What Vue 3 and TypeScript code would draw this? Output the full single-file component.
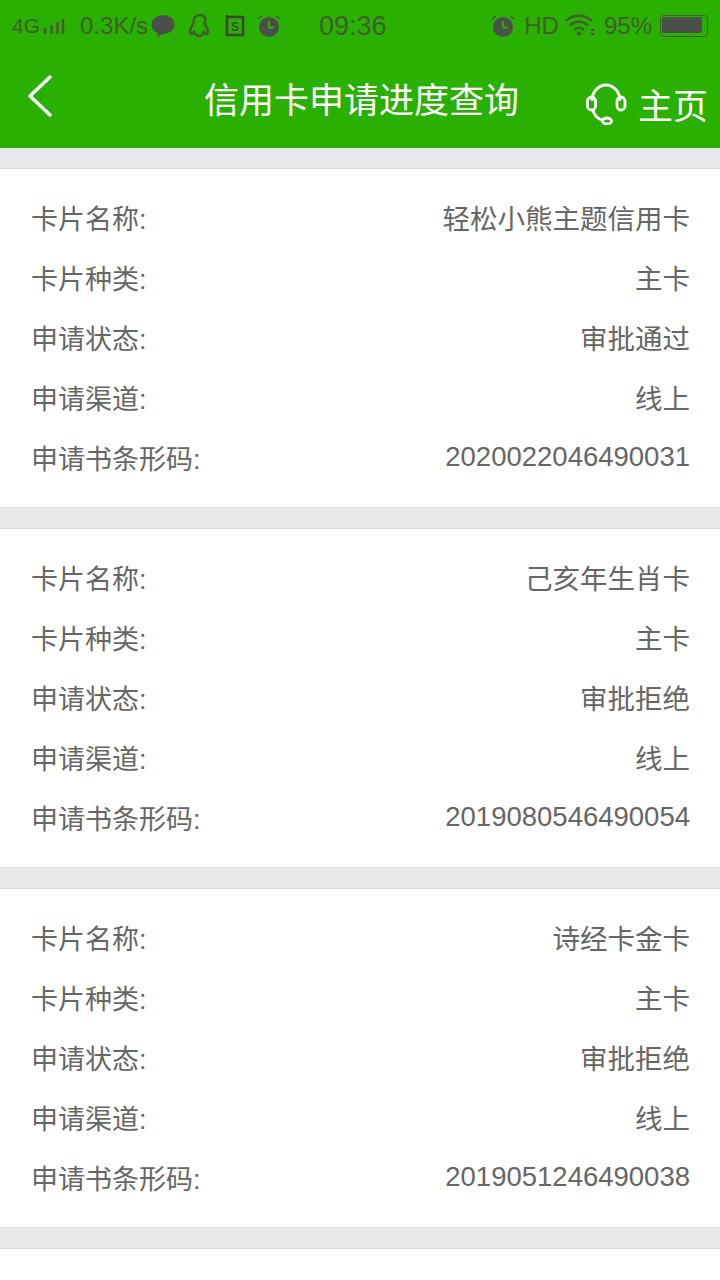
<script setup lang="ts">
interface Card {
  name: string
  kind: string
  status: string
  channel: string
  code: string
}

const cards: Card[] = [
  { name: '轻松小熊主题信用卡', kind: '主卡', status: '审批通过', channel: '线上', code: '2020022046490031' },
  { name: '己亥年生肖卡', kind: '主卡', status: '审批拒绝', channel: '线上', code: '2019080546490054' },
  { name: '诗经卡金卡', kind: '主卡', status: '审批拒绝', channel: '线上', code: '2019051246490038' }
]

function rows(card: Card) {
  return [
    ['卡片名称:', card.name],
    ['卡片种类:', card.kind],
    ['申请状态:', card.status],
    ['申请渠道:', card.channel],
    ['申请书条形码:', card.code]
  ]
}
</script>

<template>
  <div class="page">
    <div class="header">
      <div class="status-bar">
        <div class="status-left">
          <span class="net">4G</span>
          <svg class="signal" width="22" height="18" viewBox="0 0 22 18">
            <path d="M2 11v6M8.500 8v9M14.500 5v12M20 2v15" stroke="#3f5f2a" stroke-width="2.500" fill="none" />
          </svg>
          <span class="speed">0.3K/s</span>
          <svg class="ic-msg" width="24" height="24" viewBox="0 0 24 24">
            <ellipse cx="12" cy="10.500" rx="11.500" ry="9.500" fill="#4a4f4a" />
            <path d="M6 17l1 6 6-4z" fill="#4a4f4a" />
          </svg>
          <svg class="ic-qq" width="26" height="26" viewBox="0 0 26 26">
            <path d="M13 2c-4.500 0-6.500 3.500-6.500 7.500 0 2-3.500 5.500-3.500 9 0 2 1 3 2 2.500l2-2c.8 1.500 1.500 2.500 2.500 3.200 1.600 1 3.400 1 5 0 1-.7 1.700-1.700 2.500-3.200l2 2c1 .5 2-.5 2-2.500 0-3.500-3.500-7-3.500-9C19.500 5.500 17.500 2 13 2z" fill="none" stroke="#3f5f2a" stroke-width="2.600" />
          </svg>
          <svg class="ic-s" width="20" height="22" viewBox="0 0 20 22">
            <path d="M2 2h16v18H2zM2 2V0" fill="none" stroke="#3a4a30" stroke-width="2.600" />
            <text x="10" y="16" text-anchor="middle" font-size="12" font-weight="700" font-family="Liberation Sans, sans-serif" fill="#3a4a30">S</text>
          </svg>
          <svg class="ic-clock" width="24" height="24" viewBox="0 0 24 24">
            <circle cx="12" cy="13" r="10" fill="#4a4f4a" />
            <path d="M12 7v6.500h5" stroke="#2ab000" stroke-width="2" fill="none" />
            <path d="M1 5l4-3M23 5l-4-3" stroke="#4a4f4a" stroke-width="1.500" fill="none" />
          </svg>
        </div>
        <span class="time">09:36</span>
        <div class="status-right">
          <svg class="ic-clock" width="24" height="24" viewBox="0 0 24 24">
            <circle cx="12" cy="13" r="10" fill="#4a4f4a" />
            <path d="M12 7v6.500h5" stroke="#2ab000" stroke-width="2" fill="none" />
            <path d="M1 5l4-3M23 5l-4-3" stroke="#4a4f4a" stroke-width="1.500" fill="none" />
          </svg>
          <span class="hd">HD</span>
          <svg class="ic-wifi" width="32" height="24" viewBox="0 0 32 24">
            <path d="M1 7c7-7 19-7 26 0M5 11.500c5-5 13-5 18 0M9 16c3-3 7-3 10 0" fill="none" stroke="#3f5f2a" stroke-width="2.400" />
            <path d="M11.500 19.500l2.500-2.500 2.500 2.500-2.500 2.500z" fill="#3f5f2a" />
            <path d="M25 17h5l-2.500-3zM25 19h5l-2.500 3z" fill="#3f5f2a" />
          </svg>
          <span class="battery-text">95%</span>
          <div class="battery"><div class="battery-fill"></div></div>
        </div>
      </div>
      <div class="nav-bar">
        <svg class="back" width="26" height="44" viewBox="0 0 26 44">
          <path d="M24 3L4 22l20 19" fill="none" stroke="#fff" stroke-width="3.500" stroke-linecap="round" stroke-linejoin="round" />
        </svg>
        <span class="title">信用卡申请进度查询</span>
        <div class="home">
          <svg width="42" height="42" viewBox="0 0 42 42">
            <path d="M6 18C6 8 13 2 20 2s14 6 14 16" fill="none" stroke="#fff" stroke-width="2.800" />
            <rect x="1.500" y="14" width="8" height="13" rx="4" fill="none" stroke="#fff" stroke-width="2.800" />
            <rect x="31" y="14" width="8" height="13" rx="4" fill="none" stroke="#fff" stroke-width="2.800" />
            <path d="M7 27c1 6 5 9 11 11" fill="none" stroke="#fff" stroke-width="2.800" />
            <ellipse cx="21" cy="38" rx="4.500" ry="3" fill="none" stroke="#fff" stroke-width="2.800" />
          </svg>
          <span>主页</span>
        </div>
      </div>
    </div>

    <div class="list">
      <div v-for="card in cards" :key="card.code" class="card">
        <div v-for="row in rows(card)" :key="row[0]" class="row">
          <span class="label">{{ row[0] }}</span>
          <span class="value">{{ row[1] }}</span>
        </div>
      </div>
      <div class="card empty"></div>
    </div>
  </div>
</template>

<style>
html,
body {
  margin: 0;
  background: #e8e8e8;
}
</style>

<style scoped>
.page {
  width: 720px;
  height: 1280px;
  overflow: hidden;
  background: #e8e8e8;
  font-family: "Liberation Sans", "Noto Sans CJK SC", sans-serif;
}

.header {
  height: 148px;
  background: #2ab000;
  display: flex;
  flex-direction: column;
}

.status-bar {
  height: 52px;
  display: flex;
  align-items: center;
  padding: 0 12px;
  color: #3f5f2a;
  position: relative;
}

.status-left,
.status-right {
  display: flex;
  align-items: center;
}

.net {
  font-size: 21px;
}

.signal {
  margin-left: 3px;
}

.speed {
  font-size: 24px;
  margin-left: 15px;
}

.ic-msg {
  margin-left: 3px;
}

.ic-qq {
  margin-left: 12px;
}

.ic-s {
  margin-left: 12px;
}

.ic-clock {
  margin-left: 12px;
}

.time {
  font-size: 27px;
  margin-left: 38px;
}

.status-right {
  margin-left: auto;
}

.hd {
  font-size: 24px;
  margin-left: 9px;
}

.ic-wifi {
  margin-left: 6px;
}

.battery-text {
  font-size: 24px;
  margin-left: 7px;
}

.battery {
  width: 44px;
  height: 18px;
  margin-left: 8px;
  border: 1px solid #3f5f2a;
  border-radius: 4px;
  padding: 1px;
}

.battery-fill {
  width: 40px;
  height: 16px;
  background: #4a4f4a;
  border-radius: 2px;
}

.nav-bar {
  flex: 1;
  display: flex;
  align-items: center;
  position: relative;
  padding-left: 26px;
  color: #fff;
}

.back {
  margin-top: -8px;
}

.title {
  font-size: 35px;
  margin-left: 152px;
  margin-top: -5px;
  white-space: nowrap;
}

.home {
  position: absolute;
  right: 12px;
  top: 26px;
  display: flex;
  align-items: center;
  gap: 10px;
  font-size: 35px;
}

.list {
  padding-top: 20px;
  display: flex;
  flex-direction: column;
  gap: 20px;
}

.card {
  background: #fff;
  border-top: 1px solid #dcdcdc;
  border-bottom: 1px solid #dcdcdc;
  padding: 18px 30px 20px 31px;
  display: flex;
  flex-direction: column;
}

.card.empty {
  height: 100px;
}

.row {
  height: 60px;
  display: flex;
  justify-content: space-between;
  align-items: center;
  font-size: 27px;
  color: #666;
}

.value {
  white-space: nowrap;
  font-size: 27.500px;
}
</style>
